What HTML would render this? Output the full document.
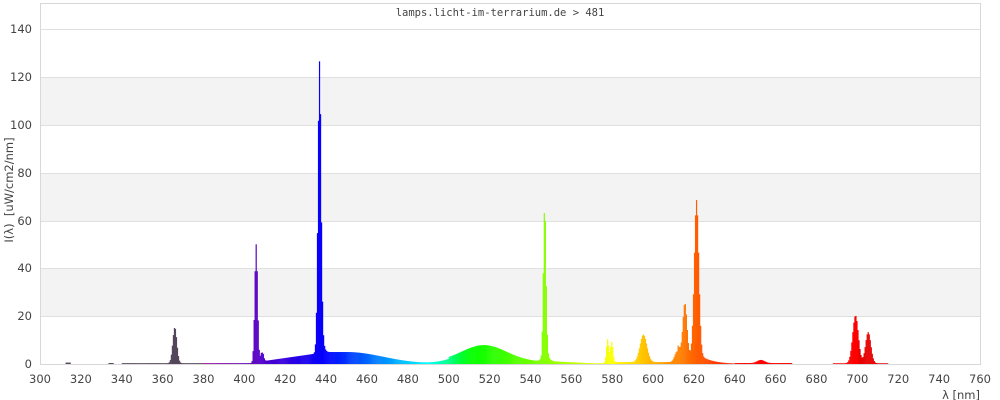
<!DOCTYPE html>
<html><head><meta charset="utf-8"><style>
html,body{margin:0;padding:0;background:#fff;width:1000px;height:400px;overflow:hidden}
svg text{font-family:"DejaVu Sans","Liberation Sans",sans-serif;fill:#444;font-size:11.5px}
</style></head><body>
<svg id="s" width="1000" height="400" xmlns="http://www.w3.org/2000/svg">
<rect x="40" y="77" width="940" height="48" fill="#f3f3f3"/>
<rect x="40" y="173" width="940" height="48" fill="#f3f3f3"/>
<rect x="40" y="268" width="940" height="48" fill="#f3f3f3"/>
<g stroke="#e0e0e0" stroke-width="1">
<line x1="40" x2="980" y1="29.5" y2="29.5"/><line x1="40" x2="980" y1="77.5" y2="77.5"/>
<line x1="40" x2="980" y1="125.5" y2="125.5"/><line x1="40" x2="980" y1="173.5" y2="173.5"/>
<line x1="40" x2="980" y1="221.5" y2="221.5"/><line x1="40" x2="980" y1="268.5" y2="268.5"/>
<line x1="40" x2="980" y1="316.5" y2="316.5"/>
</g>
<g id="bars"></g>
<rect x="40.5" y="3.5" width="940" height="361" fill="none" stroke="#d8d8d8"/>
<text x="500" y="16" text-anchor="middle" style="font-family:'DejaVu Sans Mono','Liberation Mono',monospace;font-size:10.5px">lamps.licht-im-terrarium.de &gt; 481</text>
<g text-anchor="end">
<text x="32" y="33">140</text><text x="32" y="81">120</text><text x="32" y="129">100</text>
<text x="32" y="177">80</text><text x="32" y="225">60</text><text x="32" y="272">40</text>
<text x="32" y="320">20</text><text x="32" y="368">0</text>
</g>
<text transform="translate(13,190) rotate(-90)" text-anchor="middle" xml:space="preserve">I(λ)  [uW/cm2/nm]</text>
<g id="xl" text-anchor="middle"></g>
<text x="980" y="399" text-anchor="end">λ [nm]</text>
</svg>
<script>
var X=function(n){return 40+(n-300)*2.0435;},Y=function(v){return 364-v*2.393;};
var xl=document.getElementById('xl'),h='';
for(var n=300;n<=760;n+=20)h+='<text x="'+X(n)+'" y="383">'+n+'</text>';
xl.innerHTML=h;
function g(x,m,s,a){return a*Math.exp(-(x-m)*(x-m)/(2*s*s));}
function I(w){
 var v=0;
 if(w>=340&&w<405)v+=0.35;
 if(w>312&&w<315)v+=0.6;
 if(w>333&&w<336)v+=0.4;
 v+=g(w,365.7,1.0,15);
 v+=g(w,405.5,0.7,50)+g(w,408.3,0.7,5);
 v+=g(w,436.5,0.75,116)+g(w,437.2,1.2,7);
 if(w>=409&&w<440)v+=1.2+(w-409)/31*3.8;
 if(w>=440&&w<500)v+=5*Math.exp(-Math.pow((w-450)/25,2)*(w>450?1:0));
 v+=g(w,517,11,7);
 if(w>=500&&w<545)v+=0.9;
 v+=g(w,546.7,0.65,63)+g(w,547,1.5,3);
 if(w>=548&&w<580)v+=Math.max(0.3,1.2-(w-548)*0.04);
 v+=g(w,577.5,0.6,10)+g(w,579.5,0.6,9);
 if(w>=580&&w<612)v+=0.8;
 v+=g(w,595,1.7,11.5);
 v+=g(w,611.5,1.2,4.5)+g(w,615.3,1.0,22)+g(w,621,1.1,65);
 if(w>=612&&w<640)v+=3.5*Math.exp(-Math.max(0,w-623)/6);
 if(w>=640&&w<668)v+=0.4;
 v+=g(w,652.5,1.8,1.3);
 if(w>=688&&w<715)v+=0.3;
 v+=g(w,698.8,1.4,20)+g(w,705,1.3,13);
 return v;
}
function col(w){
 var r,gg,b;
 if(w<380){return 'rgb(85,70,90)';}
 if(w<440){var t=(w-380)/60;r=(1-t)*0.6;gg=0;b=0.6+t*0.4;}
 else if(w<490){r=0;gg=(w-440)/50;b=1;}
 else if(w<510){r=0;gg=1;b=(510-w)/20;}
 else if(w<580){r=(w-510)/70;gg=1;b=0;}
 else if(w<645){r=1;gg=(645-w)/65;b=0;}
 else {r=1;gg=0;b=0;}
 if(w>700)r=0.9;
 return 'rgb('+Math.round(r*255)+','+Math.round(gg*255)+','+Math.round(b*255)+')';
}
var s='';
for(var w=300;w<760;w+=0.5){
 var v=I(w);if(v<0.15)continue;
 var y=Y(v);
 s+='<rect x="'+X(w).toFixed(2)+'" y="'+y.toFixed(2)+'" width="1.2" height="'+(364-y).toFixed(2)+'" fill="'+col(w)+'"/>';
}
document.getElementById('bars').innerHTML=s;
</script>
</body></html>
